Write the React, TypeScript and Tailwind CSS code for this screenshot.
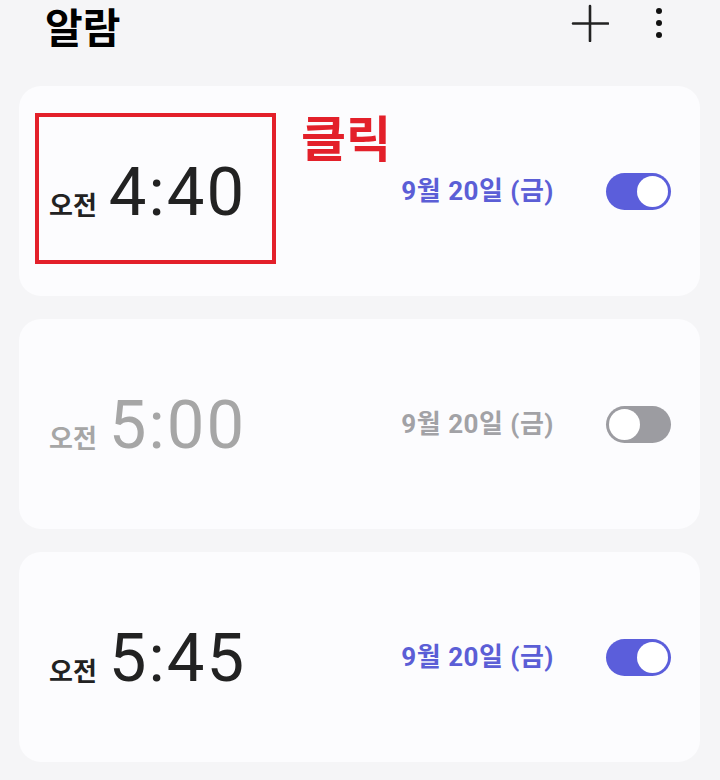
import React from 'react';

type Alarm = {
  time: string;
  date: string;
  on: boolean;
  marked?: boolean;
};

const alarms: Alarm[] = [
  { time: '4:40', date: '9월 20일 (금)', on: true, marked: true },
  { time: '5:00', date: '9월 20일 (금)', on: false },
  { time: '5:45', date: '9월 20일 (금)', on: true },
];

const font = { fontFamily: 'Roboto, "Noto Sans CJK KR", sans-serif' };

const Toggle: React.FC<{ on: boolean }> = ({ on }) =>
  on ? (
    <div className="w-[65px] h-[37px] rounded-full bg-[#5b5edb] flex items-center justify-end p-[3px]">
      <div className="w-[31px] h-[31px] rounded-full bg-white" />
    </div>
  ) : (
    <div className="w-[65px] h-[37px] rounded-full bg-[#9c9ca1] flex items-center justify-start p-[3px]">
      <div className="w-[31px] h-[31px] rounded-full bg-white" />
    </div>
  );

const AlarmCard: React.FC<{ alarm: Alarm }> = ({ alarm }) => {
  const dim = !alarm.on;
  return (
    <div className="relative h-[210px] rounded-[22px] bg-[#fcfcfe] flex items-center pl-[30px] pr-[29px]">
      <div className="flex items-baseline gap-[12px] mt-[2px]">
        <span
          className={`text-[26px] font-bold leading-none ${dim ? 'text-[#a6a6a6]' : 'text-[#222]'}`}
          style={font}
        >
          오전
        </span>
        <span
          className={`text-[67px] font-normal leading-none tracking-[2px] ${dim ? 'text-[#a6a6a6]' : 'text-[#222]'}`}
          style={font}
        >
          {alarm.time}
        </span>
      </div>

      <span
        className={`ml-auto mr-[52px] text-[26px] font-bold tracking-[0.5px] ${dim ? 'text-[#a2a2a6]' : 'text-[#5b5ed6]'}`}
        style={font}
      >
        {alarm.date}
      </span>
      <Toggle on={alarm.on} />

      {alarm.marked && (
        <>
          {/* annotation overlay */}
          <div className="absolute left-[16px] top-[27px] w-[241px] h-[151px] border-[4px] border-[#e3202a]" />
          <span
            className="absolute left-[282px] top-[30px] text-[49px] font-bold text-[#e3202a] leading-none"
            style={font}
          >
            클릭
          </span>
        </>
      )}
    </div>
  );
};

export default function App() {
  return (
    <div className="w-[720px] h-[780px] bg-[#f5f5f7] overflow-hidden" style={font}>
      <header className="h-[86px] flex items-start pl-[45px] pr-[57px] pt-[5px]">
        <h1 className="text-[41px] font-bold text-black leading-[48px]">알람</h1>
        <div className="ml-auto flex items-center gap-[46px] mt-[-1px]">
          <svg width="38" height="38" viewBox="0 0 38 38" fill="none">
            <path d="M19 2v35M2 19.5h35" stroke="#222" strokeWidth="2.6" strokeLinecap="round" />
          </svg>
          <svg width="8" height="34" viewBox="0 0 8 34">
            <circle cx="4" cy="5" r="3" fill="#111" />
            <circle cx="4" cy="17" r="3" fill="#111" />
            <circle cx="4" cy="29" r="3" fill="#111" />
          </svg>
        </div>
      </header>
      <main className="flex flex-col gap-[23px] px-[19px] pr-[20px]">
        {alarms.map((a, i) => (
          <AlarmCard key={i} alarm={a} />
        ))}
      </main>
    </div>
  );
}
